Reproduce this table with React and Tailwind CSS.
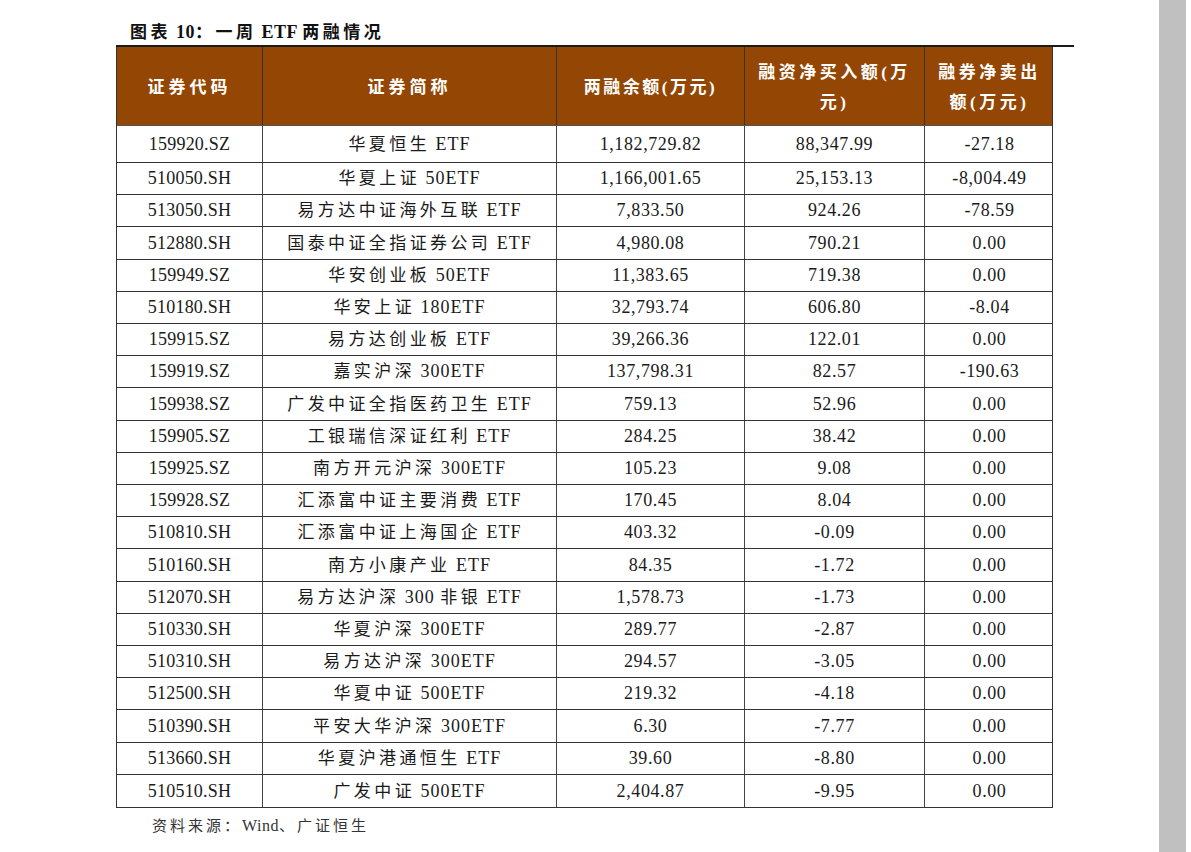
import React from "react";

// 一周 ETF 两融情况
const rows = [
  ["159920.SZ", "华夏恒生 ETF", "1,182,729.82", "88,347.99", "-27.18"],
  ["510050.SH", "华夏上证 50ETF", "1,166,001.65", "25,153.13", "-8,004.49"],
  ["513050.SH", "易方达中证海外互联 ETF", "7,833.50", "924.26", "-78.59"],
  ["512880.SH", "国泰中证全指证券公司 ETF", "4,980.08", "790.21", "0.00"],
  ["159949.SZ", "华安创业板 50ETF", "11,383.65", "719.38", "0.00"],
  ["510180.SH", "华安上证 180ETF", "32,793.74", "606.80", "-8.04"],
  ["159915.SZ", "易方达创业板 ETF", "39,266.36", "122.01", "0.00"],
  ["159919.SZ", "嘉实沪深 300ETF", "137,798.31", "82.57", "-190.63"],
  ["159938.SZ", "广发中证全指医药卫生 ETF", "759.13", "52.96", "0.00"],
  ["159905.SZ", "工银瑞信深证红利 ETF", "284.25", "38.42", "0.00"],
  ["159925.SZ", "南方开元沪深 300ETF", "105.23", "9.08", "0.00"],
  ["159928.SZ", "汇添富中证主要消费 ETF", "170.45", "8.04", "0.00"],
  ["510810.SH", "汇添富中证上海国企 ETF", "403.32", "-0.09", "0.00"],
  ["510160.SH", "南方小康产业 ETF", "84.35", "-1.72", "0.00"],
  ["512070.SH", "易方达沪深 300 非银 ETF", "1,578.73", "-1.73", "0.00"],
  ["510330.SH", "华夏沪深 300ETF", "289.77", "-2.87", "0.00"],
  ["510310.SH", "易方达沪深 300ETF", "294.57", "-3.05", "0.00"],
  ["512500.SH", "华夏中证 500ETF", "219.32", "-4.18", "0.00"],
  ["510390.SH", "平安大华沪深 300ETF", "6.30", "-7.77", "0.00"],
  ["513660.SH", "华夏沪港通恒生 ETF", "39.60", "-8.80", "0.00"],
  ["510510.SH", "广发中证 500ETF", "2,404.87", "-9.95", "0.00"],
];

const font = { fontFamily: "'Liberation Serif', 'Noto Sans CJK SC', serif" };
const cols = "grid grid-cols-[146px_294px_188px_180px_129px]";

// split into CJK and latin runs so the CJK chars get the wide spacing
const Mixed = ({ text, cjk, latin }) => {
  const parts = text.match(/[\u3000-\u9fff\uff00-\uffef]+|[^\u3000-\u9fff\uff00-\uffef]+/g) || [];
  return (
    <span>
      {parts.map((p, i) =>
        /[\u3000-\u9fff\uff00-\uffef]/.test(p) ? (
          <span key={i} className={cjk}>{p}</span>
        ) : (
          <span key={i} className={latin}>{p}</span>
        )
      )}
    </span>
  );
};

const App = () => {
  return (
    <div className="flex h-[852px] w-[1191px] bg-white overflow-hidden" style={font}>
      <div className="flex-1 pl-[116px]">
        <div className="pl-[14px] pt-[19px] h-[45px] text-[17px] font-bold text-[#111]">
          <Mixed text="图表 10：一周 ETF 两融情况" cjk="tracking-[3.5px]" latin="text-[18px] tracking-[0.5px]" />
        </div>
        <div className="w-[958px] h-[2px] bg-[#1a1a1a]" />

        <div className="w-[937px] border-x border-b border-[#333]">
          {/* header */}
          <div className={`${cols} h-[79px] bg-[#944704] text-white font-bold text-[17px] border-b border-[#555]`}>
            <div className="flex items-center justify-center pt-[4px] border-r border-[#333] tracking-[4px]">证券代码</div>
            <div className="flex items-center justify-center pt-[4px] border-r border-[#333] tracking-[4px]">证券简称</div>
            <div className="flex items-center justify-center pt-[4px] border-r border-[#333] tracking-[2.5px]">两融余额(万元)</div>
            <div className="flex flex-col items-center justify-center pt-[4px] border-r border-[#333] leading-[30px] tracking-[3.5px]">
              <span>融资净买入额(万</span>
              <span>元)</span>
            </div>
            <div className="flex flex-col items-center justify-center pt-[4px] leading-[30px] tracking-[3.5px]">
              <span>融券净卖出</span>
              <span>额(万元)</span>
            </div>
          </div>

          {/* body */}
          {rows.map((r, i) => {
            const h = i === 0 ? "h-[37px]" : [3, 8, 13, 18].includes(i) ? "h-[33px]" : "h-[32px]";
            return (
              <div
                key={r[0]}
                className={`${cols} ${h} text-[18px] text-[#1a1a1a] ${i < rows.length - 1 ? "border-b border-[#333]" : ""}`}
              >
                <div className="flex items-center justify-center border-r border-[#444] tracking-[0.2px]">{r[0]}</div>
                <div className="flex items-center justify-center border-r border-[#444]">
                  <Mixed text={r[1]} cjk="text-[17px] tracking-[3.4px]" latin="tracking-[1px]" />
                </div>
                <div className="flex items-center justify-center border-r border-[#444] tracking-[0.6px]">{r[2]}</div>
                <div className="flex items-center justify-center border-r border-[#444] tracking-[0.6px]">{r[3]}</div>
                <div className="flex items-center justify-center tracking-[0.6px]">{r[4]}</div>
              </div>
            );
          })}
        </div>

        <div className="pl-[36px] pt-[6px] text-[15px] text-[#333]">
          <Mixed text="资料来源：Wind、广证恒生" cjk="tracking-[3px]" latin="text-[16px] tracking-[0.5px]" />
        </div>
      </div>
      <div className="w-[27px] h-full bg-[#c0c0c0] mr-[5px]" />
    </div>
  );
};

export default App;
